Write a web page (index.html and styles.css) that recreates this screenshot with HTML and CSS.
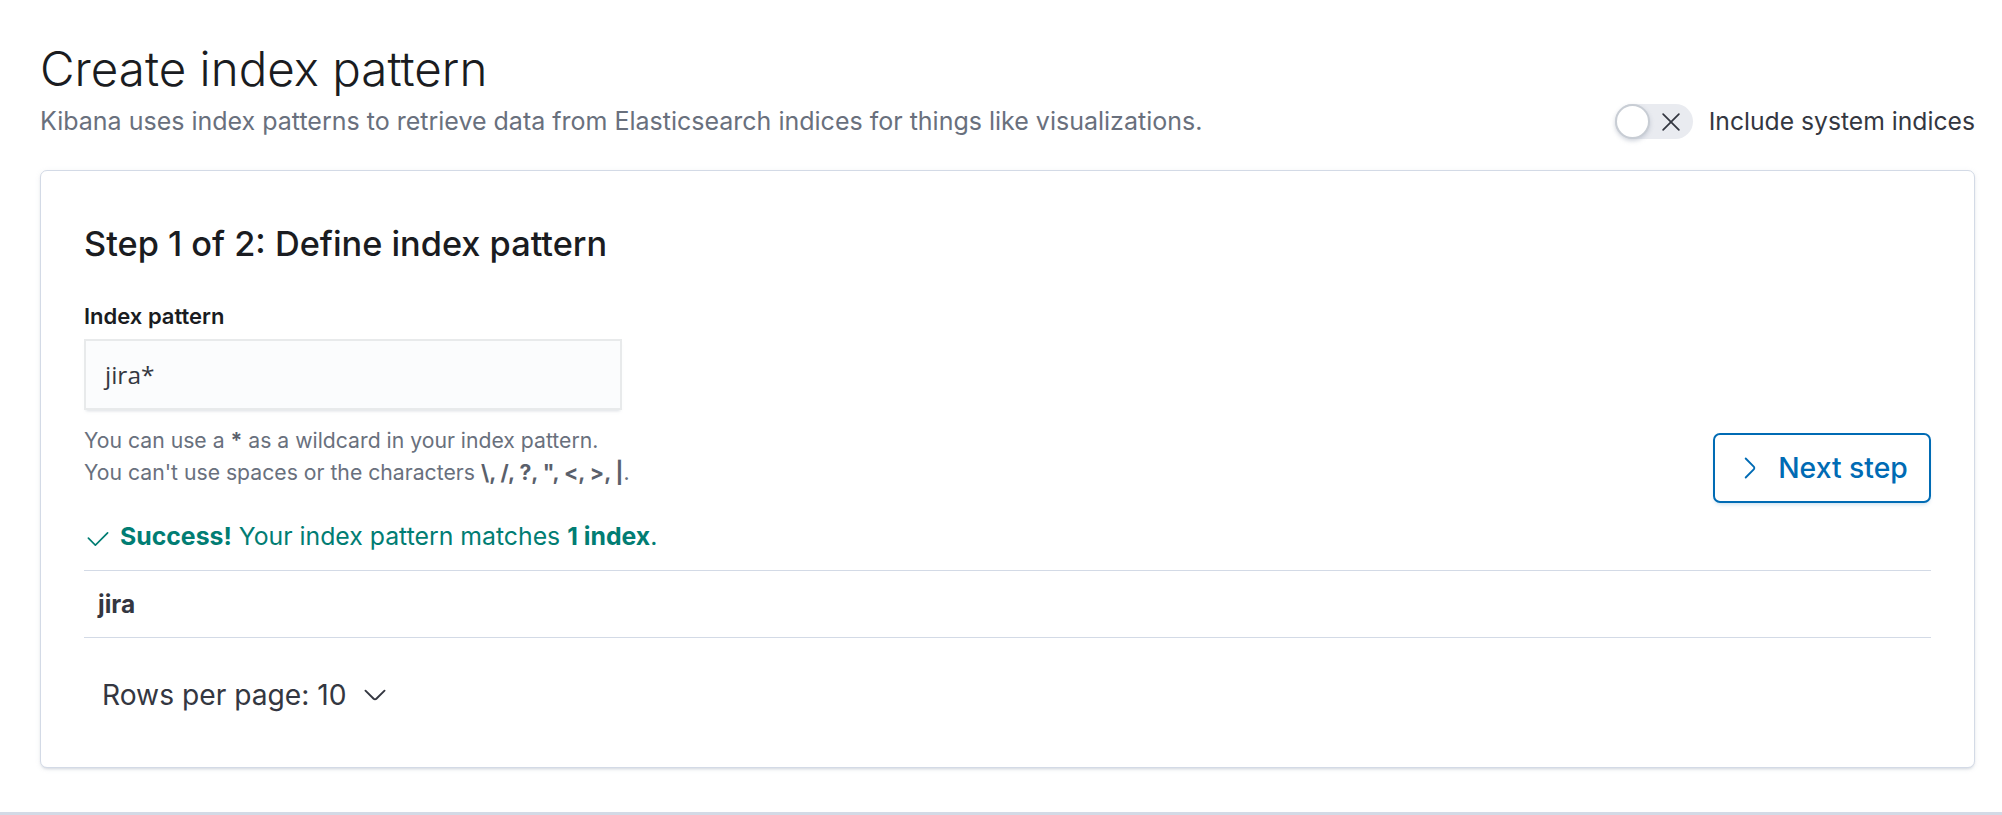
FILE: index.html
```html
<!DOCTYPE html>
<html lang="en">
<head>
<meta charset="utf-8">
<title>Create index pattern</title>
<link rel="stylesheet" href="styles.css">
</head>
<body>
<div class="app">
  <main class="page">
    <header class="page-header">
      <div class="header-text">
        <h1 class="title">Create index pattern</h1>
        <p class="subtitle">Kibana uses index patterns to retrieve data from Elasticsearch indices for things like visualizations.</p>
      </div>
      <div class="switch-row">
        <span class="switch">
          <span class="knob"></span>
          <svg class="switch-x" viewBox="0 0 16 16"><path d="M7.293 8L3.146 3.854a.5.5 0 11.708-.708L8 7.293l4.146-4.147a.5.5 0 01.708.708L8.707 8l4.147 4.146a.5.5 0 01-.708.708L8 8.707l-4.146 4.147a.5.5 0 01-.708-.708L7.293 8z"/></svg>
        </span>
        <span class="switch-label">Include system indices</span>
      </div>
    </header>

    <section class="panel">
      <h2 class="step-title">Step 1 of 2: Define index pattern</h2>
      <div class="step-row">
        <div class="form-row">
          <div class="form-label">Index pattern</div>
          <div class="field">jira*</div>
          <div class="help">
            <div>You can use a <b>*</b> as a wildcard in your index pattern.</div>
            <div>You can't use spaces or the characters <b>\, /, ?, ", &lt;, &gt;, |</b>.</div>
          </div>
        </div>
        <button class="next-btn">
          <svg class="btn-icon" viewBox="0 0 16 16"><path d="M5.157 13.069l4.611-4.685a.546.546 0 000-.768L5.158 2.93a.552.552 0 010-.771.53.53 0 01.759 0l4.61 4.684c.631.641.63 1.672 0 2.312l-4.61 4.684a.53.53 0 01-.76 0 .552.552 0 010-.771z"/></svg>
          <span>Next step</span>
        </button>
      </div>

      <p class="success">
        <svg class="success-icon" viewBox="0 0 16 16"><path d="M6.5 12a.502.502 0 01-.354-.146l-4-4a.502.502 0 01.708-.708L6.5 10.793l6.646-6.647a.502.502 0 01.708.708l-7 7A.502.502 0 016.5 12"/></svg>
        <span><b>Success!</b> Your index pattern matches <b>1 index</b>.</span>
      </p>

      <div class="index-list">
        <div class="index-row">jira</div>
      </div>

      <div class="pager">
        <button class="rows-btn">
          <span>Rows per page: 10</span>
          <svg class="rows-icon" viewBox="0 0 16 16"><path d="M13.069 5.157L8.384 9.768a.546.546 0 01-.768 0L2.93 5.158a.552.552 0 00-.771 0 .53.53 0 000 .759l4.684 4.61c.641.631 1.672.63 2.312 0l4.684-4.61a.53.53 0 000-.76.552.552 0 00-.771 0z"/></svg>
        </button>
      </div>
    </section>
  </main>
  <footer class="bottom-bar"></footer>
</div>
</body>
</html>
```

FILE: styles.css
```css
* {
  box-sizing: border-box;
}

html,
body {
  margin: 0;
  padding: 0;
}

body {
  font-family: Inter, "Noto Sans", sans-serif;
  background: #ffffff;
  color: #343741;
}

.app {
  display: flex;
  flex-direction: column;
  min-height: 100vh;
}

.page {
  flex: 1;
  padding: 39px 27px 44px 40px;
}

.page-header {
  display: flex;
  justify-content: space-between;
  align-items: flex-end;
  margin-bottom: 31px;
}

.title {
  margin: 0;
  font-size: 47.5px;
  line-height: 59px;
  font-weight: 300;
  color: #1a1c21;
}

.subtitle {
  margin: 6px 0 0;
  font-size: 25px;
  line-height: 35px;
  color: #69707d;
}

.switch-row {
  display: flex;
  align-items: center;
  gap: 16px;
  height: 35px;
}

.switch {
  width: 78px;
  height: 35px;
  border-radius: 18px;
  background: #e9ebf0;
  display: flex;
  align-items: center;
  justify-content: space-between;
}

.knob {
  width: 35px;
  height: 35px;
  border-radius: 50%;
  background: #ffffff;
  border: 2px solid #c8cdd4;
  box-shadow: 0 2px 4px rgba(152, 162, 179, 0.45);
}

.switch-x {
  width: 28px;
  height: 28px;
  margin-right: 8px;
  fill: #343741;
}

.switch-label {
  font-size: 24.7px;
  line-height: 35px;
  color: #343741;
}

.panel {
  border: 1px solid #d3dae6;
  border-radius: 7px;
  background: #ffffff;
  box-shadow: 0 2px 3px -1px rgba(152, 162, 179, 0.35), 0 1px 6px -2px rgba(152, 162, 179, 0.3);
  padding: 52px 43px;
}

.step-title {
  margin: 0 0 37px;
  font-size: 34.3px;
  line-height: 42px;
  font-weight: 500;
  color: #1a1c21;
}

.step-row {
  display: flex;
  justify-content: space-between;
  align-items: flex-start;
}

.form-label {
  font-size: 22px;
  line-height: 28px;
  font-weight: 600;
  color: #1a1c21;
  margin-bottom: 9px;
}

.field {
  width: 538px;
  height: 71px;
  display: flex;
  align-items: center;
  padding: 0 21px;
  background: #fbfcfd;
  box-shadow: inset 0 0 0 2px rgba(16, 22, 26, 0.08), 0 3px 3px -2px rgba(152, 162, 179, 0.35);
  font-family: "Open Sans", "Noto Sans", sans-serif;
  font-size: 24.5px;
  color: #343741;
}

.help {
  margin-top: 15px;
  font-size: 21.2px;
  line-height: 31.5px;
  color: #69707d;
}

.help b {
  font-weight: 700;
  color: #5a606b;
}

.next-btn {
  margin-top: 131px;
  width: 218px;
  height: 70px;
  border: 2px solid #006bb4;
  border-radius: 7px;
  background: #ffffff;
  color: #006bb4;
  font-family: Inter, "Noto Sans", sans-serif;
  font-size: 28.3px;
  font-weight: 500;
  display: flex;
  align-items: center;
  justify-content: center;
  gap: 14px;
  padding: 0;
  box-shadow: 0 3px 4px -2px rgba(0, 107, 180, 0.25);
}

.btn-icon {
  width: 28px;
  height: 28px;
  fill: #006bb4;
}

.success {
  display: flex;
  align-items: flex-start;
  gap: 8px;
  margin: 16px 0;
  font-size: 24.8px;
  line-height: 35px;
  color: #017d73;
}

.success b {
  font-weight: 700;
}

.success-icon {
  flex: none;
  width: 28px;
  height: 28px;
  margin-top: 6px;
  fill: #017d73;
}

.index-list {
  border-top: 1px solid #d3dae6;
}

.index-row {
  height: 67px;
  display: flex;
  align-items: center;
  padding: 0 14px;
  border-bottom: 1px solid #d3dae6;
  font-size: 24.5px;
  font-weight: 700;
  color: #343741;
}

.pager {
  margin-top: 37px;
  display: flex;
}

.rows-btn {
  display: flex;
  align-items: center;
  gap: 14px;
  height: 40px;
  padding: 0 0 0 18px;
  border: 0;
  background: none;
  font-family: Inter, "Noto Sans", sans-serif;
  font-size: 28.2px;
  line-height: 40px;
  font-weight: 400;
  color: #343741;
}

.rows-icon {
  width: 28px;
  height: 28px;
  fill: #343741;
}

.bottom-bar {
  height: 3px;
  background: #d3dae6;
}
```
